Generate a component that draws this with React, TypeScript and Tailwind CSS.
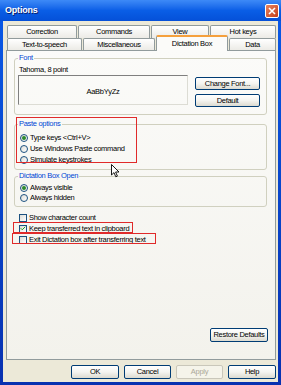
import { Check } from "lucide-react";

const topTabs = [
  { label: "Correction", w: "w-[70px]" },
  { label: "Commands", w: "w-[72px]" },
  { label: "View", w: "w-[58px]" },
  { label: "Hot keys", w: "w-[66px]" },
];

function Tab({ label, w, selected }: { label: string; w: string; selected?: boolean }) {
  if (selected) {
    return (
      <div
        className={`${w} relative z-10 h-[16px] -mb-px flex items-center justify-center rounded-t-[2px] border border-b-0 border-[#919b9c] border-t-[2px] border-t-[#f5a03c] bg-[#fbfbf9] pb-[1px]`}
      >
        {label}
      </div>
    );
  }
  return (
    <div
      className={`${w} h-full flex items-center justify-center rounded-t-[2px] border border-b-0 border-[#919b9c] bg-gradient-to-b from-white to-[#ecebe6]`}
    >
      {label}
    </div>
  );
}

function XpButton({ label, w, h = "h-[14px]", disabled }: { label: string; w: string; h?: string; disabled?: boolean }) {
  return (
    <div
      className={`${w} ${h} flex items-center justify-center whitespace-nowrap rounded-[2px] border ${
        disabled
          ? "border-[#c9c7ba] bg-[#f5f4ea] text-[#aca899]"
          : "border-[#003c74] bg-gradient-to-b from-white via-[#f4f4f0] to-[#dcdad0] text-black"
      }`}
    >
      {label}
    </div>
  );
}

function Radio({ label, checked }: { label: string; checked?: boolean }) {
  return (
    <div className="flex items-center gap-[2px] h-full">
      <span className="w-[8px] h-[8px] rounded-full border border-[#1c5180] bg-gradient-to-br from-[#dcdcd7] to-white flex items-center justify-center">
        {checked && <span className="w-[4px] h-[4px] rounded-full bg-[#2c8a2c]" />}
      </span>
      <span>{label}</span>
    </div>
  );
}

function CheckBox({ label, checked }: { label: string; checked?: boolean }) {
  return (
    <div className="h-[11px] flex items-center gap-[2px]">
      <span className="w-[8px] h-[8px] border border-[#1c5180] bg-gradient-to-br from-[#dcdcd7] to-white flex items-center justify-center">
        {checked && <Check size={7} strokeWidth={4} className="text-[#21a121]" />}
      </span>
      <span>{label}</span>
    </div>
  );
}

function Group({ title, className, children }: { title: string; className: string; children: React.ReactNode }) {
  return (
    <fieldset className={`${className} mx-[7px] mr-[8px] rounded-[3px] border border-[#d0d0bf]`}>
      <legend className="ml-[3px] px-[1px] leading-[10px] text-[#0046d5]">{title}</legend>
      {children}
    </fieldset>
  );
}

function Cursor() {
  return (
    <svg className="absolute left-[111px] top-[164px]" width="9" height="14" viewBox="0 0 9 14">
      <path d="M0.5 0.5 L0.5 11 L3 8.6 L4.8 12.8 L6.4 12.1 L4.6 8 L8 8 Z" fill="white" stroke="black" strokeWidth="0.9" strokeLinejoin="round" />
    </svg>
  );
}

export default function App() {
  return (
    <div className="relative w-[281px] h-[385px] flex flex-col overflow-hidden bg-gradient-to-b from-[#0a5ae8] to-[#0831b0] font-['Liberation_Sans',Arial,sans-serif] text-[7.5px] leading-none text-black tracking-[-0.3px]">
      {/* title bar */}
      <div className="h-[21px] shrink-0 flex items-center justify-between pl-[5px] pr-[2px] bg-gradient-to-b from-[#3d8af7] via-[#0a5ee6] to-[#0550d8]">
        <span className="text-[9px] font-bold text-white tracking-[-0.2px] [text-shadow:1px_1px_0_#0a1e6e]">Options</span>
        <div className="w-[14px] h-[14px] rounded-[2px] border border-white bg-gradient-to-br from-[#e8825e] to-[#c33c17] flex items-center justify-center">
          <svg width="8" height="8" viewBox="0 0 8 8">
            <path d="M1 1 L7 7 M7 1 L1 7" stroke="white" strokeWidth="1.6" />
          </svg>
        </div>
      </div>

      {/* body */}
      <div className="flex-1 mx-[3px] mb-[3px] flex flex-col bg-[#ece9d8]">
        {/* tabs */}
        <div className="shrink-0 h-[29px] pt-[4px] pl-[4px] flex flex-col">
          <div className="h-[13px] flex gap-[1px]">
            {topTabs.map((t) => (
              <Tab key={t.label} label={t.label} w={t.w} />
            ))}
          </div>
          <div className="h-[12px] flex items-end gap-[1px]">
            <Tab label="Text-to-speech" w="w-[75px]" />
            <Tab label="Miscellaneous" w="w-[72px]" />
            <Tab label="Dictation Box" w="w-[72px]" selected />
            <Tab label="Data" w="w-[47px]" />
          </div>
        </div>

        {/* panel */}
        <div className="flex-1 ml-[3px] mr-[2px] flex flex-col border border-[#919b9c] bg-gradient-to-b from-[#fbfbf9] to-[#f3f2ec]">
          <Group title="Font" className="mt-[2px] pb-[7px]">
            <div className="pl-[4px] pt-[2px] h-[12px] leading-[10px]">Tahoma, 8 point</div>
            <div className="flex pl-[3px]">
              <div className="w-[170px] h-[30px] flex items-center justify-center pt-[4px] border border-t-[#7f7f7f] border-l-[#7f7f7f] border-r-[#dcdcd4] border-b-[#dcdcd4]">
                AaBbYyZz
              </div>
              <div className="ml-[7px] mt-[2px] flex flex-col gap-[4px]">
                <XpButton label="Change Font..." w="w-[65px]" h="h-[13px]" />
                <XpButton label="Default" w="w-[65px]" h="h-[13px]" />
              </div>
            </div>
          </Group>

          <Group title="Paste options" className="mt-[4px] pb-[4px]">
            <div className="pl-[5px] pt-[3px] flex flex-col">
              <div className="h-[11px]"><Radio label="Type keys <Ctrl+V>" checked /></div>
              <div className="h-[11px]"><Radio label="Use Windows Paste command" /></div>
              <div className="h-[11px]"><Radio label="Simulate keystrokes" /></div>
            </div>
          </Group>

          <Group title="Dictation Box Open" className="mt-[1px] pb-[3px]">
            <div className="pl-[5px] pt-[2px] flex flex-col">
              <div className="h-[10px]"><Radio label="Always visible" checked /></div>
              <div className="h-[10px]"><Radio label="Always hidden" /></div>
            </div>
          </Group>

          <div className="mt-[5px] pl-[12px] flex flex-col">
            <CheckBox label="Show character count" />
            <CheckBox label="Keep transferred text in clipboard" checked />
            <CheckBox label="Exit Dictation box after transferring text" />
          </div>

          <div className="mt-auto mb-[17px] mr-[7px] self-end">
            <XpButton label="Restore Defaults" w="w-[58px]" h="h-[14px]" />
          </div>
        </div>

        {/* footer buttons */}
        <div className="shrink-0 h-[22px] pt-[5px] pr-[2px] flex justify-end gap-[5px]">
          <XpButton label="OK" w="w-[48px]" />
          <XpButton label="Cancel" w="w-[47px]" />
          <XpButton label="Apply" w="w-[47px]" disabled />
          <XpButton label="Help" w="w-[48px]" />
        </div>
      </div>

      {/* red annotation boxes */}
      <div className="absolute left-[16px] top-[117px] w-[121px] h-[46px] border-[1.5px] border-[#e02a2a]" />
      <div className="absolute left-[13px] top-[222px] w-[120px] h-[11px] border-[1.5px] border-[#e02a2a]" />
      <div className="absolute left-[12px] top-[233px] w-[144px] h-[11px] border-[1.5px] border-[#e02a2a]" />

      <Cursor />
    </div>
  );
}
